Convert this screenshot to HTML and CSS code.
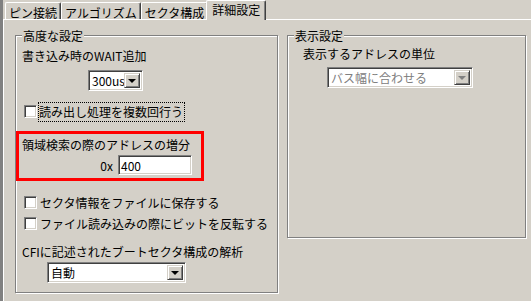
FILE: index.html
```html
<!DOCTYPE html>
<html lang="ja">
<head>
  <meta charset="UTF-8" />
  <title>詳細設定</title>
  <link rel="stylesheet" href="styles.css">
</head>
<body>
  <div class="window">
    <div class="tabs">
      <div class="tab">ピン接続</div>
      <div class="tab">アルゴリズム</div>
      <div class="tab">セクタ構成</div>
      <div class="tab active">詳細設定</div>
    </div>

    <div class="panel">
      <div class="group group-adv">
        <div class="group-title">高度な設定</div>
        <div class="label label-wait">書き込み時のWAIT追加</div>
        <div class="combo combo-wait">
          <span class="combo-text">300us</span>
          <span class="drop"><span class="arrow"></span></span>
        </div>

        <div class="check check-multi">
          <span class="box"></span>
          <span class="check-text focus">読み出し処理を複数回行う</span>
        </div>

        <div class="highlight">
          <div class="label">領域検索の際のアドレスの増分</div>
          <div class="hex-row">
            <span class="hex-label">0x</span>
            <div class="field">400</div>
          </div>
        </div>

        <div class="check check-save">
          <span class="box"></span>
          <span class="check-text">セクタ情報をファイルに保存する</span>
        </div>
        <div class="check check-invert">
          <span class="box"></span>
          <span class="check-text">ファイル読み込みの際にビットを反転する</span>
        </div>

        <div class="label label-cfi">CFIに記述されたブートセクタ構成の解析</div>
        <div class="combo combo-cfi">
          <span class="combo-text">自動</span>
          <span class="drop"><span class="arrow"></span></span>
        </div>
      </div>

      <div class="group group-view">
        <div class="group-title">表示設定</div>
        <div class="label label-unit">表示するアドレスの単位</div>
        <div class="combo combo-unit disabled">
          <span class="combo-text">バス幅に合わせる</span>
          <span class="drop"><span class="arrow"></span></span>
        </div>
      </div>
    </div>
  </div>
</body>
</html>
```

FILE: styles.css
```css
* {
  box-sizing: border-box;
}

html,
body {
  margin: 0;
  width: 531px;
  height: 301px;
  overflow: hidden;
}

body {
  background: #d4d0c8;
  color: #000;
  font-family: "Noto Sans CJK JP", "DejaVu Sans", sans-serif;
  font-size: 12px;
  line-height: 13px;
}

.window {
  display: flex;
  flex-direction: column;
  height: 301px;
  border-left: 3px solid #808080;
}

/* tab strip */

.tabs {
  display: flex;
  align-items: flex-end;
  height: 19px;
  padding-left: 2px;
}

.tab {
  height: 17px;
  padding: 3px 3px 0;
  border-top: 1px solid #fff;
  border-left: 1px solid #fff;
  border-right: 1px solid #404040;
  border-radius: 2px 2px 0 0;
  box-shadow: inset -1px 0 #808080;
  white-space: nowrap;
}

.tab.active {
  position: relative;
  z-index: 1;
  height: 20px;
  margin: 0 -2px -1px;
  padding: 2px 5px 0;
  background: #d4d0c8;
}

/* page */

.panel {
  flex: 1;
  display: flex;
  align-items: flex-start;
  gap: 9px;
  padding: 15px 0 0 11px;
  border-top: 1px solid #fff;
  border-left: 1px solid #fff;
}

.group {
  display: flex;
  flex-direction: column;
  align-items: flex-start;
  border: 1px solid #808080;
  box-shadow: inset 1px 1px #fff, 1px 1px #fff;
}

.group-adv {
  width: 263px;
  height: 258px;
}

.group-view {
  width: 239px;
  height: 203px;
}

.group-title {
  margin: -7px 0 0 6px;
  padding: 0 1px;
  background: #d4d0c8;
}

.label {
  white-space: nowrap;
}

.label-wait {
  margin: 7px 0 0 6px;
}

.label-cfi {
  margin: 15px 0 0 6px;
}

.label-unit {
  margin: 5px 0 0 15px;
}

/* combo boxes */

.combo {
  display: flex;
  align-items: stretch;
  height: 21px;
  padding: 2px;
  background: #fff;
  border: 1px solid;
  border-color: #808080 #fff #fff #808080;
  box-shadow: inset 1px 1px #404040, inset -1px -1px #d4d0c8;
}

.combo-text {
  flex: 1;
  padding-left: 1px;
  line-height: 15px;
  white-space: nowrap;
  overflow: hidden;
}

.drop {
  display: flex;
  align-items: center;
  justify-content: center;
  width: 16px;
  background: #d4d0c8;
  border: 1px solid;
  border-color: #d4d0c8 #404040 #404040 #d4d0c8;
  box-shadow: inset 1px 1px #fff, inset -1px -1px #808080;
}

.arrow {
  width: 0;
  height: 0;
  border-left: 4px solid transparent;
  border-right: 4px solid transparent;
  border-top: 4px solid #000;
  margin-top: 1px;
}

.combo-wait {
  width: 55px;
  margin: 8px 0 0 72px;
}

.combo-cfi {
  width: 139px;
  margin: 4px 0 0 31px;
}

.combo-unit {
  width: 146px;
  margin: 7px 0 0 39px;
}

.combo.disabled .combo-text {
  color: #808080;
}

.combo.disabled .arrow {
  border-top-color: #808080;
}

/* check boxes */

.check {
  display: flex;
  align-items: center;
  height: 13px;
  margin-left: 8px;
}

.check-multi {
  margin-top: 14px;
}

.check-save {
  margin-top: 15px;
}

.check-invert {
  margin-top: 8px;
}

.box {
  width: 13px;
  height: 13px;
  background: #fff;
  border: 1px solid;
  border-color: #808080 #fff #fff #808080;
  box-shadow: inset 1px 1px #404040, inset -1px -1px #d4d0c8;
}

.check-text {
  margin-left: 3px;
  white-space: nowrap;
}

.check-text.focus {
  margin-left: 2px;
  padding: 2px 1px 3px 0;
  outline: 1px dotted #000;
}

/* highlighted address step */

.highlight {
  width: 188px;
  margin-top: 13px;
  padding: 4px 0 3px 3px;
  border: 3px solid #ff0000;
}

.hex-row {
  display: flex;
  align-items: center;
  margin-top: 4px;
}

.hex-label {
  width: 96px;
  padding-right: 5px;
  text-align: right;
}

.field {
  width: 74px;
  height: 20px;
  padding: 2px 2px 0;
  background: #fff;
  border: 1px solid;
  border-color: #808080 #fff #fff #808080;
  box-shadow: inset 1px 1px #404040, inset -1px -1px #d4d0c8;
  line-height: 15px;
}
```
